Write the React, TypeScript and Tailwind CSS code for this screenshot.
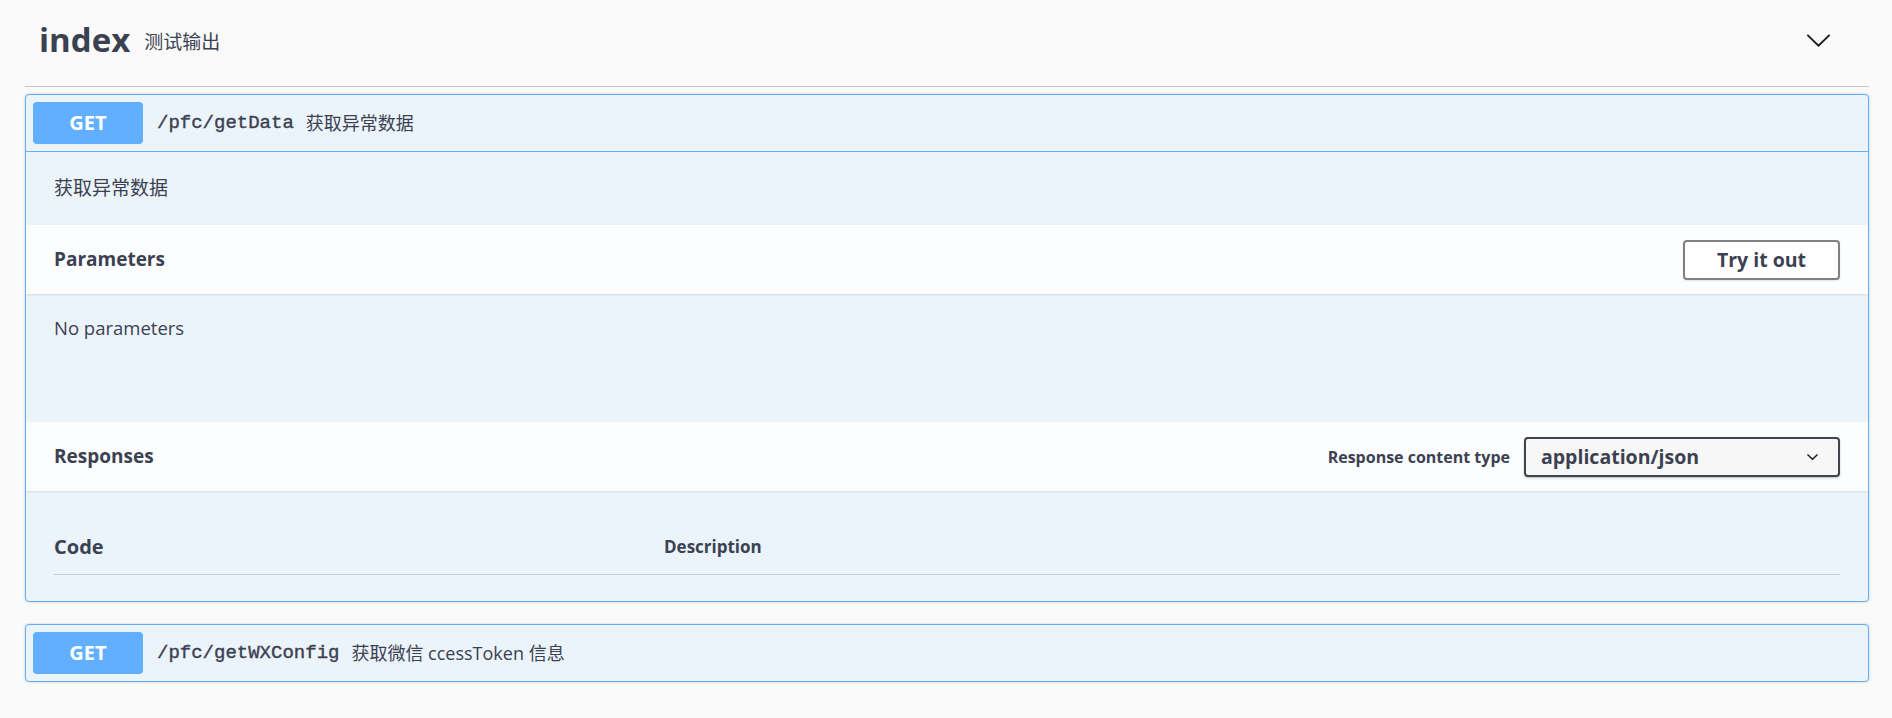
import React from "react";

const SANS = "font-['Open_Sans','Noto_Sans_CJK_SC',sans-serif]";

function GetSummary({ path, summary }: { path: string; summary: string }) {
  return (
    <div className="flex h-[56px] items-center pl-[7px]">
      <span className="flex h-[42px] w-[110px] items-center justify-center rounded-[4px] bg-[#61affe] text-[20px] font-bold text-white">
        GET
      </span>
      <span className="ml-[14px] font-['Liberation_Mono',monospace] text-[19px] text-[#3b4151] [-webkit-text-stroke:0.4px_#3b4151]">
        {path}
      </span>
      <span className="ml-[12px] text-[18px] text-[#3b4151]">{summary}</span>
    </div>
  );
}

function Chevron({ className, width = 2 }: { className?: string; width?: number }) {
  return (
    <svg viewBox="0 0 26 14" className={className} fill="none" stroke="currentColor" strokeWidth={width}>
      <polyline points="1,1 13,12.5 25,1" />
    </svg>
  );
}

export default function App() {
  return (
    <div className={`min-h-screen bg-[#fafafa] pl-[25px] pr-[23px] text-[#3b4151] ${SANS}`}>
      {/* tag header */}
      <div className="flex h-[87px] items-center border-b border-[#c4c6cb] pb-[7px] pl-[14px] pr-[38px]">
        <span className="text-[33px] font-bold leading-none">index</span>
        <span className="ml-[14px] mt-[6px] text-[19px]">测试输出</span>
        <Chevron className="ml-auto mt-[2px] h-[13px] w-[25px] text-[#1a1a1a]" />
      </div>

      {/* expanded operation */}
      <div className="mt-[7px] overflow-hidden rounded-[4px] border border-[#61affe] bg-[#ebf3fb] shadow-[0_0_3px_rgba(0,0,0,0.19)]">
        <div className="border-b border-[#61affe]">
          <GetSummary path="/pfc/getData" summary="获取异常数据" />
        </div>

        <div className="flex h-[73px] items-center px-[28px] text-[19px]">获取异常数据</div>

        <div className="flex h-[69px] items-center justify-between bg-[#fbfdfe] pl-[28px] pr-[28px] shadow-[0_1px_2px_rgba(0,0,0,0.1)]">
          <span className="text-[19px] font-bold">Parameters</span>
          <button className="flex h-[40px] w-[157px] items-center justify-center rounded-[4px] border-2 border-[#808080] bg-white text-[19.5px] font-bold text-[#3b4151] shadow-[0_1px_2px_rgba(0,0,0,0.1)]">
            Try it out
          </button>
        </div>

        <div className="h-[128px] px-[28px] pt-[20px] text-[18.5px]">No parameters</div>

        <div className="flex h-[69px] items-center bg-[#fbfdfe] pl-[28px] pr-[28px] shadow-[0_1px_2px_rgba(0,0,0,0.1)]">
          <span className="text-[19px] font-bold">Responses</span>
          <span className="ml-auto text-[16px] font-bold">Response content type</span>
          <div className="ml-[14px] flex h-[40px] w-[316px] items-center rounded-[4px] border-2 border-[#41444e] bg-[#f7f7f7] pl-[15px] pr-[20px] shadow-[0_1px_2px_rgba(0,0,0,0.25)]">
            <span className="text-[19.5px] font-bold">application/json</span>
            <Chevron className="ml-auto h-[6px] w-[11px] text-[#222]" width={3.5} />
          </div>
        </div>

        <div className="px-[28px] pb-[26px] pt-[44px]">
          <div className="flex h-[40px] items-start border-b border-[#c5cad3]">
            <span className="w-[610px] text-[20px] font-bold leading-[24px]">Code</span>
            <span className="text-[17px] font-bold leading-[24px]">Description</span>
          </div>
        </div>
      </div>

      {/* collapsed operation */}
      <div className="mt-[22px] rounded-[4px] border border-[#61affe] bg-[#ebf3fb] shadow-[0_0_3px_rgba(0,0,0,0.19)]">
        <GetSummary path="/pfc/getWXConfig" summary="获取微信 ccessToken 信息" />
      </div>
    </div>
  );
}
